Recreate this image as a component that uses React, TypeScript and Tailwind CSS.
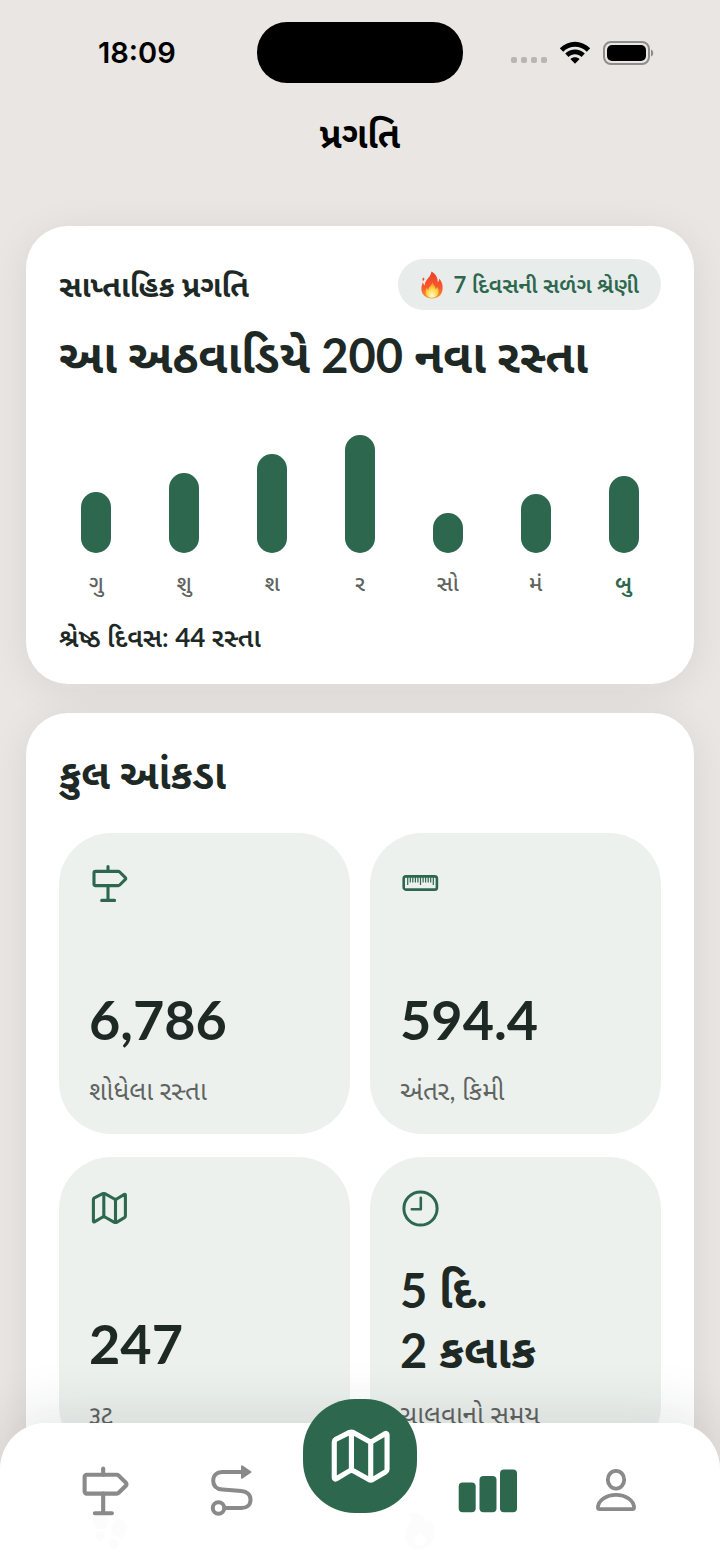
import React from "react";

interface IconProps {
  className?: string;
}

const SignpostIcon = ({ className }: IconProps) => (
  <svg viewBox="0 0 40 40" className={className} fill="none" stroke="currentColor" strokeWidth="3.100" strokeLinecap="round" strokeLinejoin="round" aria-hidden="true">
    <path d="M19 2.600V7.400M19 21.600V36.400M12.700 36.400H25.600" />
    <path d="M6.600 7.400H29.200a2 2 0 0 1 1.500.6l5.400 5.300a1.700 1.700 0 0 1 0 2.400l-5.400 5.300a2 2 0 0 1-1.500.6H6.600a1.600 1.600 0 0 1-1.600-1.600V9A1.600 1.600 0 0 1 6.600 7.400Z" />
  </svg>
);

const RulerIcon = ({ className }: IconProps) => (
  <svg viewBox="0 0 40 40" className={className} fill="none" stroke="currentColor" aria-hidden="true">
    <rect x="3.700" y="12.400" width="33.200" height="13.200" rx="2.200" strokeWidth="2.600" />
    <path d="M7.700 13V21M20.500 13V21M33.300 13V21" strokeWidth="1.200" />
    <path d="M10.300 13V18.600M12.800 13V18.600M15.400 13V18.600M17.900 13V18.600M23.100 13V18.600M25.600 13V18.600M28.200 13V18.600M30.700 13V18.600" strokeWidth="1.200" />
  </svg>
);

const MapIcon = ({ className }: IconProps) => (
  <svg viewBox="0 0 40 40" className={className} fill="none" stroke="currentColor" strokeWidth="3.100" strokeLinecap="round" strokeLinejoin="round" aria-hidden="true">
    <path d="M4.400 11.600a2 2 0 0 1 1-1.700l8.300-4.200a2.600 2.600 0 0 1 2.200 0L25.400 11a2.600 2.600 0 0 0 2.200 0l7.800-4.600a.7.7 0 0 1 1 .6V28a2 2 0 0 1-1 1.700l-7.800 4.600a2.600 2.600 0 0 1-2.200 0L15.900 29a2.600 2.600 0 0 0-2.200 0l-8.300 4.900a.7.7 0 0 1-1-.6Z" />
    <path d="M14.800 5.800V28.600M26.500 11.600V34.400" />
  </svg>
);

const ClockIcon = ({ className }: IconProps) => (
  <svg viewBox="0 0 40 40" className={className} fill="none" stroke="currentColor" strokeLinecap="round" strokeLinejoin="round" aria-hidden="true">
    <circle cx="20.500" cy="20.500" r="16.600" strokeWidth="3" />
    <path d="M20.800 9.700V21.200H11.800" strokeWidth="2.600" />
  </svg>
);

const StepsIcon = ({ className }: IconProps) => (
  <svg viewBox="0 0 40 40" className={className} fill="currentColor" aria-hidden="true">
    <path d="M5 3C9 0 15 0 18 4c2 4 0 9-2 13H7C4 12 2 7 5 3ZM7 20h8c1 5 0 9-4 9s-5-4-4-9ZM24 11c4-5 11-5 13 0 2 5-1 12-4 15l-9-3c-2-4-2-8 0-12ZM22 26l8 3c0 5-3 8-6 8-4-1-4-6-2-11Z" />
  </svg>
);

const StreakIcon = ({ className }: IconProps) => (
  <svg viewBox="0 0 40 40" className={className} fill="currentColor" fillRule="evenodd" aria-hidden="true">
    <path d="M9 1c8-2 15 2 17 9l3-3c5 5 7 12 5 18-2 8-8 12-14 12C10 37 4 31 5 22c0-6 5-9 6-14 0-3-1-5-2-7Zm11 19c-1 4-5 5-5 9 0 3 2 5 5 5s6-2 6-6c0-3-3-5-6-8Z" />
  </svg>
);

const RouteIcon = ({ className }: IconProps) => (
  <svg viewBox="0 0 52 53" className={className} fill="none" stroke="currentColor" strokeWidth="4" strokeLinecap="round" strokeLinejoin="round" aria-hidden="true">
    <circle cx="12.500" cy="43" r="5.700" />
    <path d="M19 43H35.500c5.500 0 9-3.200 9-8.300s-3.500-8.300-9-8.800L16.500 24.500C10.500 24 7.200 20.800 7.200 15.700S10.700 7 16.500 7H36" />
    <path d="M36 1.200V12.800L44.400 7Z" fill="currentColor" strokeWidth="2" />
  </svg>
);

const ProgressIcon = ({ className }: IconProps) => (
  <svg viewBox="0 0 60 53" className={className} fill="currentColor" aria-hidden="true">
    <rect x="0.700" y="17.600" width="17" height="29.600" rx="4" />
    <rect x="21.500" y="11" width="17" height="36.200" rx="4" />
    <rect x="42" y="4.600" width="17" height="42.600" rx="4" />
  </svg>
);

const ProfileIcon = ({ className }: IconProps) => (
  <svg viewBox="0 0 52 53" className={className} fill="none" stroke="currentColor" strokeWidth="3.800" strokeLinejoin="round" aria-hidden="true">
    <ellipse cx="26" cy="14.700" rx="8.200" ry="8.900" />
    <path d="M9.500 44.200c-1.200 0-1.700-.8-1.600-2C8.500 35.500 16 29.800 26 29.800s17.500 5.700 18.100 12.400c.1 1.200-.4 2-1.600 2Z" />
  </svg>
);

const FlameEmoji = ({ className }: IconProps) => (
  <svg viewBox="0 0 24 28" className={className} aria-hidden="true">
    <defs>
      <linearGradient id="flame-outer" x1="0" y1="0" x2="0" y2="1">
        <stop offset="0" stopColor="#e8402a" />
        <stop offset="0.6" stopColor="#f9592b" />
        <stop offset="1" stopColor="#fb9a2c" />
      </linearGradient>
      <radialGradient id="flame-inner" cx="0.5" cy="0.85" r="0.8">
        <stop offset="0" stopColor="#fffbd0" />
        <stop offset="0.5" stopColor="#ffd84a" />
        <stop offset="1" stopColor="#fb8a2c" />
      </radialGradient>
    </defs>
    <path d="M11.500.5c4 2.500 6.500 6 6.300 10.700 1-.7 1.500-2 1.400-3.600 2.500 3 3.800 6.500 3.400 10.400C22 24 18 27.500 12 27.500S1.800 24 1.400 18.500c-.2-3 .8-5.500 1.600-7.500.2 1.700.7 2.700 1.800 3.400C4.500 9 10.500 7 11.500.5ZM3.500 6.500c1.500.8 1 2.500-.5 3.500C2 9 2.300 7.500 3.500 6.500Z" fill="url(#flame-outer)" />
    <path d="M12.500 11c.5 3 3 4 3.300 7 .8-.5 1.200-1.300 1.200-2.300 1.500 2 2 4 1.500 6-.8 3.300-3.200 5-6.500 5s-6-1.700-6.400-5c-.2-2 .4-3.600 1.400-5 .2 1.200.6 1.800 1.400 2.300C8.500 15.500 12 14.500 12.500 11Z" fill="url(#flame-inner)" />
  </svg>
);

const days = [
  { label: "ગુ", height: 61 },
  { label: "શુ", height: 80 },
  { label: "શ", height: 99 },
  { label: "ર", height: 118 },
  { label: "સો", height: 40 },
  { label: "મં", height: 59 },
  { label: "બુ", height: 77, today: true },
];

interface Stat {
  icon: React.ComponentType<IconProps>;
  value?: string[];
  label?: string;
}

const stats: Stat[] = [
  { icon: SignpostIcon, value: ["6,786"], label: "શોધેલા રસ્તા" },
  { icon: RulerIcon, value: ["594.4"], label: "અંતર, કિમી" },
  { icon: MapIcon, value: ["247"], label: "રૂટ" },
  { icon: ClockIcon, value: ["5 દિ.", "2 કલાક"], label: "ચાલવાનો સમય" },
  { icon: StepsIcon },
  { icon: StreakIcon },
];

const StatusBar = () => (
  <div className="grid grid-cols-[1fr_206px_1fr] items-center px-[26px] pt-[22px]">
    <span className="pt-px pl-[72px] font-[Inter] text-[29px] leading-[36px] font-semibold">18:09</span>
    <div className="h-[61px] rounded-[30px] bg-black" />
    <div className="flex items-center justify-end gap-[12px] pr-[40px]">
      <div className="flex gap-[4px] pt-[14px]">
        {[0, 1, 2, 3].map((dot) => (
          <span key={dot} className="size-[6px] rounded-[2px] bg-[#b9b5b3]" />
        ))}
      </div>
      <svg viewBox="0 0 32 24" className="h-[24px] w-[32px]" aria-hidden="true">
        <path d="M.8 7.300C9.500-1.600 22.500-1.600 31.200 7.300L27.800 10.700C21.300 4 10.700 4 4.200 10.700Z" />
        <path d="M6.200 12.600c5.600-5.600 14-5.600 19.600 0l-3.300 3.300c-3.700-3.700-9.300-3.700-13 0Z" />
        <path d="M11.400 18c2.700-2.500 6.500-2.500 9.200 0L16 22.800Z" />
      </svg>
      <svg viewBox="0 0 51 24" className="h-[24px] w-[51px]" aria-hidden="true">
        <rect x="1" y="1" width="45" height="22" rx="7" fill="none" stroke="#8f8c8b" strokeWidth="2" />
        <rect x="4" y="4" width="39" height="16" rx="5" />
        <path d="M48 8.500c3 1 3 6 0 7Z" fill="#8f8c8b" />
      </svg>
    </div>
  </div>
);

const WeeklyCard = () => (
  <section className="rounded-[42px] bg-white p-[33px] shadow-[0_6px_40px_rgba(30,30,30,0.08)]">
    <div className="flex items-center justify-between">
      <h2 className="text-[30px] leading-[36px] font-bold">સાપ્તાહિક પ્રગતિ</h2>
      <div className="flex h-[51px] items-center gap-[10px] rounded-full bg-[#e8edeb] px-[22px] text-[22px] leading-[28px] font-semibold text-[#2d684e]">
        <FlameEmoji className="h-[28px] w-[24px]" />
        <span><span className="font-bold">7</span> દિવસની સળંગ શ્રેણી</span>
      </div>
    </div>
    <p className="mt-4 text-[47px] leading-[58px] font-bold">આ અઠવાડિયે 200 નવા રસ્તા</p>
    <div className="mt-[51px] grid grid-cols-7 gap-[13px]">
      {days.map((day) => (
        <div key={day.label} className="flex flex-col items-center justify-end gap-4">
          <div className="w-[30px] rounded-full bg-[#2d684e]" style={{ height: day.height }} />
          <span className={day.today ? "text-[22px] leading-[28px] font-semibold text-[#2d684e]" : "text-[22px] leading-[28px] font-medium text-[#5f6361]"}>
            {day.label}
          </span>
        </div>
      ))}
    </div>
    <p className="mt-[26px] text-[26px] leading-[28px] font-semibold">
      શ્રેષ્ઠ દિવસ: <span className="font-bold">44</span> રસ્તા
    </p>
  </section>
);

const StatTile = ({ icon: Icon, value, label }: Stat) => {
  const twoLines = value && value.length > 1;

  return (
    <div className="flex min-h-[301px] flex-col rounded-[52px] bg-[#ecf1ee] px-[30px] pt-[31px] pb-[30px]">
      <Icon className="size-[40px] text-[#2d684e]" />
      {value && (
        <p className={twoLines ? "mt-auto text-[47px] leading-[60px] font-bold" : "mt-auto text-[54px] leading-[60px] font-bold"}>
          {value.map((line) => (
            <span key={line} className="block">{line}</span>
          ))}
        </p>
      )}
      {label && (
        <p className={twoLines ? "mt-[20px] text-[26px] leading-[28px] text-[#5f6361]" : "mt-[26px] text-[26px] leading-[28px] text-[#5f6361]"}>
          {label}
        </p>
      )}
    </div>
  );
};

const TotalsCard = () => (
  <section className="rounded-[42px] bg-white p-[33px] shadow-[0_6px_40px_rgba(30,30,30,0.08)]">
    <h2 className="text-[41px] leading-[56px] font-bold">કુલ આંકડા</h2>
    <div className="mt-[31px] grid grid-cols-2 gap-x-[20px] gap-y-[23px]">
      {stats.map((stat, index) => (
        <StatTile key={index} {...stat} />
      ))}
    </div>
  </section>
);

const TabBar = () => (
  <nav className="absolute inset-x-0 bottom-0 grid h-[141px] grid-cols-5 items-start justify-items-center rounded-t-[46px] bg-white/98 px-[40px] pt-[42px] text-[#8a8a8a] shadow-[0_-6px_60px_rgba(30,40,35,0.13)]">
    <button type="button" aria-label="રસ્તા"><SignpostIcon className="size-[53px]" /></button>
    <button type="button" aria-label="રૂટ"><RouteIcon className="h-[53px] w-[52px]" /></button>
    <button type="button" aria-label="નકશો" className="-mt-[66px] flex size-[114px] items-center justify-center rounded-[52px] bg-[#2d684e] text-white">
      <MapIcon className="size-[66px]" />
    </button>
    <button type="button" aria-label="પ્રગતિ" className="text-[#2d684e]"><ProgressIcon className="h-[53px] w-[60px]" /></button>
    <button type="button" aria-label="પ્રોફાઇલ"><ProfileIcon className="h-[53px] w-[52px]" /></button>
  </nav>
);

const App = () => {
  return (
    <div className="relative flex h-screen flex-col overflow-hidden bg-[#eae6e3] font-[Lato,'Noto_Sans_Gujarati','Noto_Sans',sans-serif] text-[#1e2926]">
      <header className="text-black">
        <StatusBar />
        <h1 className="mt-[29px] text-center text-[36px] leading-[44px] font-bold">પ્રગતિ</h1>
      </header>
      <main className="flex min-h-0 flex-1 flex-col gap-[29px] overflow-y-auto px-[26px] pt-[70px] [scrollbar-width:none]">
        <WeeklyCard />
        <TotalsCard />
      </main>
      <TabBar />
    </div>
  );
};

export default App;
